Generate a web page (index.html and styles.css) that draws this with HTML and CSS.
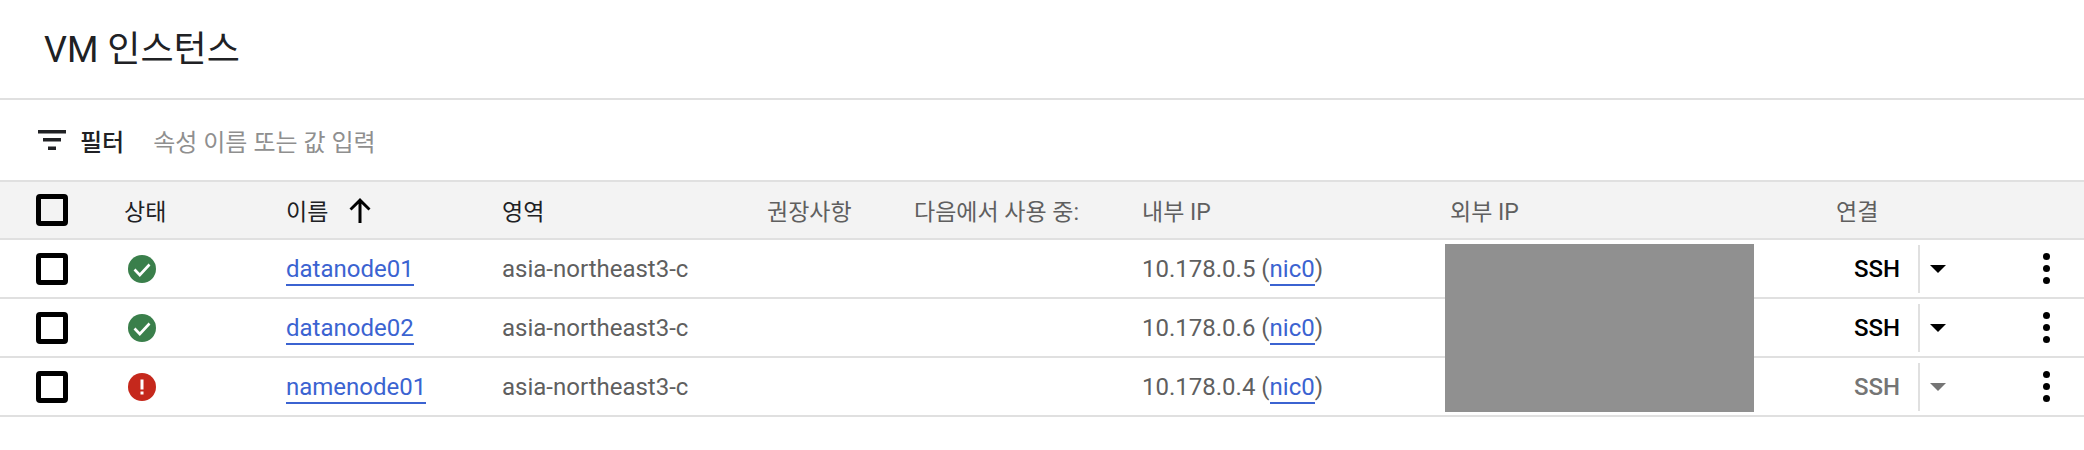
FILE: index.html
```html
<!DOCTYPE html>
<html lang="ko">
<head>
<meta charset="utf-8">
<title>VM 인스턴스</title>
<link rel="stylesheet" href="styles.css">
</head>
<body>
<div class="page">
  <header class="title-bar"><h1 class="title">VM 인스턴스</h1></header>
  <div class="filter-bar">
    <svg class="filter-icon" viewBox="0 0 28 20"><path d="M0 0h28v3.5H0zM5 8h18v3.5H5zM10 16.500h8V20h-8z"/></svg>
    <span class="filter-label">필터</span>
    <span class="filter-hint">속성 이름 또는 값 입력</span>
  </div>
  <div class="table">
    <div class="row head">
      <span class="check"></span>
      <span class="dark">상태</span>
      <span class="dark sort">이름<svg class="arrow" viewBox="0 0 24 26"><path d="M12 1 1.500 11.500l2 2L10.500 6.800V26h3V6.800l7 6.700 2-2z"/></svg></span>
      <span class="dark">영역</span>
      <span>권장사항</span>
      <span>다음에서 사용 중:</span>
      <span>내부 IP</span>
      <span>외부 IP</span>
      <span>연결</span>
      <span></span>
    </div>
    <div class="row">
      <span class="check"></span>
      <svg class="status" viewBox="0 0 28 28"><circle cx="14" cy="14" r="14" fill="#3a7f4b"/><path d="M6.500 14.500 11.800 20 21.500 9.500" fill="none" stroke="#fff" stroke-width="2.600"/></svg>
      <span><a class="link" href="#">datanode01</a></span>
      <span>asia-northeast3-c</span><span></span><span></span>
      <span>10.178.0.5 (<a class="link" href="#">nic0</a>)</span>
      <span></span>
      <span class="connect"><b class="ssh">SSH</b><i class="divider"></i><i class="caret"></i></span>
      <span class="kebab"><i></i><i></i><i></i></span>
    </div>
    <div class="row">
      <span class="check"></span>
      <svg class="status" viewBox="0 0 28 28"><circle cx="14" cy="14" r="14" fill="#3a7f4b"/><path d="M6.500 14.500 11.800 20 21.500 9.500" fill="none" stroke="#fff" stroke-width="2.600"/></svg>
      <span><a class="link" href="#">datanode02</a></span>
      <span>asia-northeast3-c</span><span></span><span></span>
      <span>10.178.0.6 (<a class="link" href="#">nic0</a>)</span>
      <span></span>
      <span class="connect"><b class="ssh">SSH</b><i class="divider"></i><i class="caret"></i></span>
      <span class="kebab"><i></i><i></i><i></i></span>
    </div>
    <div class="row">
      <span class="check"></span>
      <svg class="status" viewBox="0 0 28 28"><circle cx="14" cy="14" r="14" fill="#c5281c"/><path d="M12.500 6.500h3v10h-3zM12.500 18.500h3v3h-3z" fill="#fff"/></svg>
      <span><a class="link" href="#">namenode01</a></span>
      <span>asia-northeast3-c</span><span></span><span></span>
      <span>10.178.0.4 (<a class="link" href="#">nic0</a>)</span>
      <span></span>
      <span class="connect off"><b class="ssh">SSH</b><i class="divider"></i><i class="caret"></i></span>
      <span class="kebab"><i></i><i></i><i></i></span>
    </div>
    <div class="redacted"></div>
  </div>
</div>
</body>
</html>
```
FILE: styles.css
```css
* { box-sizing: border-box; }
html, body { margin: 0; padding: 0; background: #fff; overflow: hidden; }
.page {
  width: 2084px;
  height: 450px;
  font-family: Roboto, "Noto Sans CJK KR", sans-serif;
  color: #5f5f5f;
  font-size: 24px;
}
.title-bar {
  height: 100px;
  padding: 0 0 0 44px;
  display: flex;
  align-items: center;
  border-bottom: 2px solid #e0e0e0;
}
.title {
  margin: 0 0 6px;
  font-size: 36px;
  font-weight: 400;
  color: #202124;
}
.filter-bar {
  height: 80px;
  display: flex;
  align-items: center;
  padding-left: 38px;
}
.filter-icon { width: 28px; height: 20px; fill: #202124; }
.filter-label { margin-left: 14px; color: #202124; font-weight: 500; }
.filter-hint { margin-left: 29px; color: #8f8f8f; }
.table { position: relative; border-top: 2px solid #e0e0e0; }
.row {
  display: grid;
  grid-template-columns: 88px 162px 216px 265px 147px 228px 308px 386px 207px 1fr;
  align-items: center;
  height: 59px;
  margin-top: -1px;
  padding-left: 36px;
  border-bottom: 2px solid #e0e0e0;
  white-space: nowrap;
}
.row + .row { margin-top: 0; }
.head { height: 58px; margin-top: 0; background: #f3f3f3; font-size: 23px; }
.dark { color: #202124; }
.sort { display: flex; align-items: center; }
.arrow { width: 24px; height: 26px; margin-left: 20px; fill: #000; }
.check {
  display: block;
  width: 32px;
  height: 32px;
  border: 5px solid #000;
  border-radius: 4px;
}
.status { width: 28px; height: 28px; margin-left: 4px; }
.link {
  color: #3b63d1;
  text-decoration: none;
  border-bottom: 2px solid #3b63d1;
  padding-bottom: 1px;
}
.connect { display: flex; align-items: center; color: #000; padding-left: 18px; }
.ssh { font-weight: 500; width: 48px; }
.divider { width: 2px; height: 48px; background: #e0e0e0; margin-left: 16px; }
.caret {
  width: 0;
  height: 0;
  margin-left: 10px;
  border-left: 8px solid transparent;
  border-right: 8px solid transparent;
  border-top: 8px solid currentColor;
}
.off { color: #757575; }
.kebab { display: flex; flex-direction: column; align-items: flex-start; gap: 5px; margin-left: 0; }
.kebab i { width: 7px; height: 7px; border-radius: 50%; background: #000; }
.redacted {
  position: absolute;
  left: 1445px;
  top: 62px;
  width: 309px;
  height: 168px;
  background: #909090;
}
```
